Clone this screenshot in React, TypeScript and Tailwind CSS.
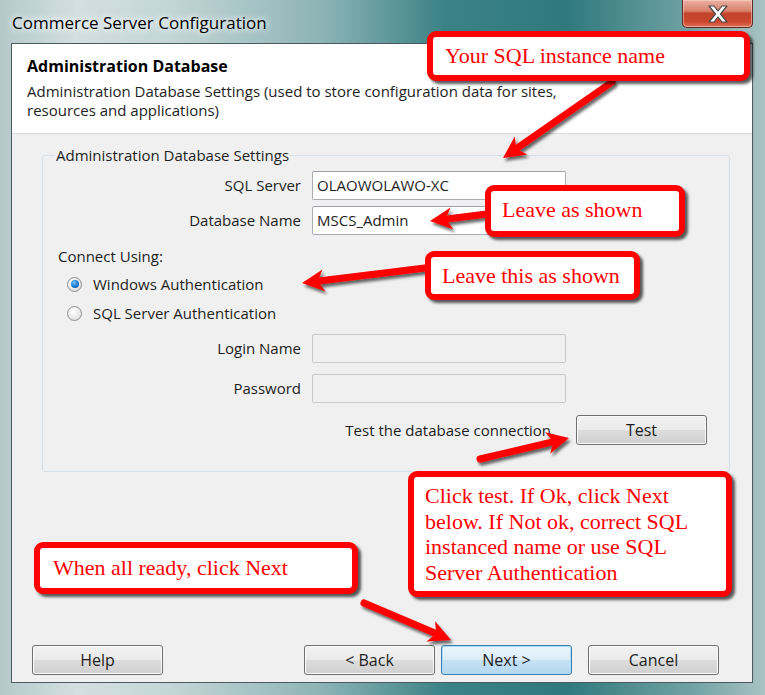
import React from 'react';

const btn =
  'h-[30px] w-[131px] rounded-[3px] border border-[#707070] bg-[linear-gradient(#f2f2f2_0%,#ebebeb_50%,#dddddd_50%,#cfcfcf_100%)] text-[16px] text-[#1e1e1e] shadow-[inset_0_0_0_1px_#fbfbfb]';

const arrows: [number, number, number, number][] = [
  [612, 82, 503, 158],
  [487, 214, 430, 221],
  [425, 268, 302, 283],
  [480, 459, 569, 438],
  [364, 603, 451, 640],
];

function Arrow({ t }: { t: [number, number, number, number] }) {
  const [x1, y1, x2, y2] = t;
  const len = Math.hypot(x2 - x1, y2 - y1);
  const dx = (x2 - x1) / len;
  const dy = (y2 - y1) / len;
  const bx = x2 - dx * 22;
  const by = y2 - dy * 22;
  const nx = -dy * 11;
  const ny = dx * 11;
  return (
    <g>
      <line x1={x1} y1={y1} x2={bx + dx * 3} y2={by + dy * 3} stroke="#ff0000" strokeWidth="7" strokeLinecap="round" />
      <polygon points={`${x2},${y2} ${bx + nx},${by + ny} ${bx + dx * 6},${by + dy * 6} ${bx - nx},${by - ny}`} fill="#ff0000" />
    </g>
  );
}

function Callout({ className, children }: { className: string; children: React.ReactNode }) {
  return (
    <div
      className={`absolute rounded-[9px] border-[6px] border-[#ff0000] bg-white font-['Liberation_Serif',serif] text-[22px] leading-[25.5px] text-[#ff0000] shadow-[3px_3px_3px_rgba(0,0,0,0.65)] ${className}`}
    >
      {children}
    </div>
  );
}

function Radio({ checked, label }: { checked?: boolean; label: string }) {
  return (
    <div className="flex h-[20px] items-center">
      <span className="ml-[24px] flex h-[15px] w-[15px] items-center justify-center rounded-full border border-[#8f9090] bg-[radial-gradient(circle_at_40%_35%,#ffffff_0%,#e6e6e6_60%,#cfcfcf_100%)]">
        {checked && (
          <span className="h-[8px] w-[8px] rounded-full bg-[radial-gradient(circle_at_40%_35%,#7cc4f4_0%,#1d7fd0_50%,#0b4a8c_100%)]" />
        )}
      </span>
      <span className="ml-[11px]">{label}</span>
    </div>
  );
}

function Field({ label, value, disabled }: { label: string; value?: string; disabled?: boolean }) {
  return (
    <div className="flex items-center">
      <span className="w-[259px] pr-[1px] text-right">{label}</span>
      <div
        className={`ml-[10px] flex h-[29px] w-[254px] items-center rounded-[2px] border pl-[4px] ${
          disabled ? 'border-[#c8c8c8] bg-[#f0f0f0]' : 'border-[#abadb3] border-t-[#9ca0a8] bg-white'
        }`}
      >
        {value}
      </div>
    </div>
  );
}

export default function App() {
  return (
    <div className="relative h-[695px] w-[765px] overflow-hidden bg-[linear-gradient(90deg,#b4c9cb_0%,#d3dfe0_10%,#c4d6d7_22%,#8db4b6_42%,#3b8286_58%,#2f797d_74%,#6fa1a3_90%,#a9c2c3_100%)] font-['Open_Sans','Noto_Sans',sans-serif] text-[15px] text-[#1e1e1e]">
      {/* title bar */}
      <div className="flex h-[43px] items-start">
        <span className="ml-[12px] mt-[10px] text-[17px] text-black [text-shadow:0_0_10px_#ffffff,0_0_6px_#ffffff]">
          Commerce Server Configuration
        </span>
        <div className="ml-auto mr-[12px] flex h-[28px] w-[71px] items-center justify-center rounded-b-[5px] border border-t-0 border-[#5b2a22] bg-[linear-gradient(#eab2a4_0%,#d9816c_40%,#c2432a_50%,#c9472d_80%,#e0705a_100%)] shadow-[inset_0_0_0_1px_rgba(255,220,210,0.5)]">
          <svg width="26" height="20" viewBox="0 0 26 20">
            <path
              d="M4 2 H9 L13 7 L17 2 H22 L15.5 10 L22 18 H17 L13 13 L9 18 H4 L10.5 10 Z"
              fill="#ffffff"
              stroke="#4a4a4a"
              strokeWidth="1.2"
              strokeLinejoin="round"
            />
          </svg>
        </div>
      </div>

      {/* client area */}
      <div className="ml-[11px] flex h-[640px] w-[742px] flex-col border border-[#4b5a60] bg-[#f0f0f0]">
        <div className="h-[90px] border-b border-[#d9d9d9] bg-white pl-[15px] pt-[12px]">
          <div className="text-[16px] font-bold leading-[20px] text-black">Administration Database</div>
          <div className="mt-[6px] leading-[19px]">
            Administration Database Settings (used to store configuration data for sites,
            <br />
            resources and applications)
          </div>
        </div>

        <div className="flex flex-1 flex-col">
          <fieldset className="ml-[30px] mt-[11px] w-[688px] rounded-[3px] border border-[#d5dfe5] pb-[26px] pt-[6px]">
            <legend className="ml-[12px] px-[1px] leading-[20px]">Administration Database Settings</legend>
            <Field label="SQL Server" value="OLAOWOLAWO-XC" />
            <div className="mt-[6px]">
              <Field label="Database Name" value="MSCS_Admin" />
            </div>
            <div className="ml-[15px] mt-[11px] leading-[20px]">Connect Using:</div>
            <div className="mt-[8px]">
              <Radio checked label="Windows Authentication" />
            </div>
            <div className="mt-[9px]">
              <Radio label="SQL Server Authentication" />
            </div>
            <div className="mt-[11px]">
              <Field label="Login Name" disabled />
            </div>
            <div className="mt-[11px]">
              <Field label="Password" disabled />
            </div>
            <div className="mt-[12px] flex items-center justify-end pr-[22px]">
              <span>Test the database connection.</span>
              <button className={`ml-[21px] h-[28px] ${btn}`}>Test</button>
            </div>
          </fieldset>

          <div className="mt-auto flex pb-[7px] pl-[20px]">
            <button className={btn}>Help</button>
            <button className={`ml-auto ${btn}`}>&lt; Back</button>
            <button className="ml-[6px] h-[30px] w-[131px] rounded-[3px] border border-[#3c7fb1] bg-[linear-gradient(#eaf5fc_0%,#dcedf8_50%,#c6e2f5_50%,#b5d8ef_100%)] text-[16px] text-[#1e1e1e] shadow-[inset_0_0_0_1px_#a8dcf8]">
              Next &gt;
            </button>
            <button className={`ml-[16px] mr-[33px] ${btn}`}>Cancel</button>
          </div>
        </div>
      </div>

      {/* annotations */}
      <svg className="pointer-events-none absolute left-0 top-0 h-[695px] w-[765px]" viewBox="0 0 765 695">
        <defs>
          <filter id="sh" x="-20%" y="-20%" width="140%" height="140%">
            <feDropShadow dx="2" dy="3" stdDeviation="1.5" floodColor="#000" floodOpacity="0.6" />
          </filter>
        </defs>
        <g filter="url(#sh)">
          {arrows.map((a, i) => (
            <Arrow key={i} t={a} />
          ))}
        </g>
      </svg>

      <Callout className="left-[427px] top-[31px] h-[50px] w-[323px] pl-[12px] pt-[6px]">Your SQL instance name</Callout>
      <Callout className="left-[485px] top-[185px] h-[52px] w-[200px] pl-[11px] pt-[6px]">Leave as shown</Callout>
      <Callout className="left-[425px] top-[251px] h-[49px] w-[215px] pl-[11px] pt-[6px]">Leave this as shown</Callout>
      <Callout className="left-[408px] top-[471px] h-[126px] w-[324px] pl-[11px] pt-[6px]">
        Click test. If Ok, click Next
        <br />
        below. If Not ok, correct SQL
        <br />
        instanced name or use SQL
        <br />
        Server Authentication
      </Callout>
      <Callout className="left-[34px] top-[542px] h-[52px] w-[324px] pl-[13px] pt-[7px]">When all ready, click Next</Callout>
    </div>
  );
}
